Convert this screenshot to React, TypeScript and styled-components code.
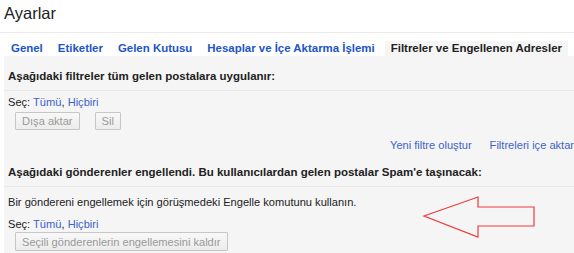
import styled, { createGlobalStyle } from "styled-components";

const Global = createGlobalStyle`
  html, body {
    margin: 0;
    padding: 0;
    background: #fff;
    overflow: hidden;
  }
  body {
    font-family: "Liberation Sans", Arial, sans-serif;
    color: #222;
  }
`;

const Page = styled.div`
  position: relative;
  width: 574px;
  height: 253px;
  overflow: hidden;
`;

const Header = styled.div`
  height: 33px;
  box-sizing: border-box;
  padding: 3px 0 0 4px;
  font-size: 16.5px;
  line-height: 20px;
  border-bottom: 1px solid #ebebeb;
`;

const TabBar = styled.div`
  display: flex;
  align-items: flex-end;
  height: 23px;
  padding-left: 4px;
  gap: 1px;
  white-space: nowrap;
`;

const Tab = styled.div<{ $active?: boolean }>`
  height: 15px;
  line-height: 15px;
  padding: 0 ${(p) => (p.$active ? "6px" : "7px")};
  margin-left: ${(p) => (p.$active ? "2px" : "0")};
  font-size: 11.45px;
  font-weight: bold;
  color: ${(p) => (p.$active ? "#222" : "#2154c9")};
  background: ${(p) => (p.$active ? "#f5f5f5" : "transparent")};
`;

const Panel = styled.div`
  margin-left: 4px;
  background: #f5f5f5;
  height: 200px;
  white-space: nowrap;
`;

const Heading = styled.div<{ $top: number }>`
  padding: ${(p) => p.$top}px 4px 6px;
  font-size: 11.5px;
  font-weight: bold;
  line-height: 16px;
  border-bottom: 1px solid #e8e8e8;
`;

const Text = styled.div<{ $top?: number }>`
  padding: ${(p) => p.$top ?? 0}px 4px 0;
  font-size: 11.1px;
  line-height: 14px;
  color: #222;
`;

const Link = styled.span`
  color: #3d63cc;
  cursor: pointer;
`;

const ButtonRow = styled.div<{ $top: number }>`
  display: flex;
  gap: 15px;
  padding: ${(p) => p.$top}px 0 0 11px;
`;

const Button = styled.button<{ $tall?: boolean }>`
  height: ${(p) => (p.$tall ? "19px" : "18px")};
  box-sizing: border-box;
  padding: 0 6px;
  font-family: inherit;
  font-size: 11.1px;
  color: #999;
  background: linear-gradient(#f8f8f8, #ececec);
  border: 1px solid #c6c6c6;
  border-radius: 1px;
  line-height: 16px;
`;

const LinkRow = styled.div`
  display: flex;
  gap: 18px;
  padding: 8px 0 0 386px;
  font-size: 11.1px;
  line-height: 14px;
`;

const Arrow = styled.svg`
  position: absolute;
  left: 422px;
  top: 195px;
`;

export default function App() {
  return (
    <Page>
      <Global />
      <Header>Ayarlar</Header>
      <TabBar>
        <Tab>Genel</Tab>
        <Tab>Etiketler</Tab>
        <Tab>Gelen Kutusu</Tab>
        <Tab>Hesaplar ve İçe Aktarma İşlemi</Tab>
        <Tab $active>Filtreler ve Engellenen Adresler</Tab>
      </TabBar>
      <Panel>
        <Heading $top={12}>Aşağıdaki filtreler tüm gelen postalara uygulanır:</Heading>
        <Text $top={4}>
          Seç: <Link>Tümü</Link>, <Link>Hiçbiri</Link>
        </Text>
        <ButtonRow $top={3}>
          <Button>Dışa aktar</Button>
          <Button>Sil</Button>
        </ButtonRow>
        <LinkRow>
          <Link>Yeni filtre oluştur</Link>
          <Link>Filtreleri içe aktar</Link>
        </LinkRow>
        <Heading $top={12}>
          Aşağıdaki gönderenler engellendi. Bu kullanıcılardan gelen postalar Spam'e taşınacak:
        </Heading>
        <Text $top={8}>Bir göndereni engellemek için görüşmedeki Engelle komutunu kullanın.</Text>
        <Text $top={8}>
          Seç: <Link>Tümü</Link>, <Link>Hiçbiri</Link>
        </Text>
        <ButtonRow $top={1}>
          <Button $tall>Seçili gönderenlerin engellemesini kaldır</Button>
        </ButtonRow>
      </Panel>
      <Arrow width="116" height="46" viewBox="0 0 116 46">
        <polygon
          points="2,21 56,2 56,12 112,12 112,31 56,31 56,42"
          fill="none"
          stroke="#ee3b3b"
          strokeWidth="1.2"
        />
      </Arrow>
    </Page>
  );
}
